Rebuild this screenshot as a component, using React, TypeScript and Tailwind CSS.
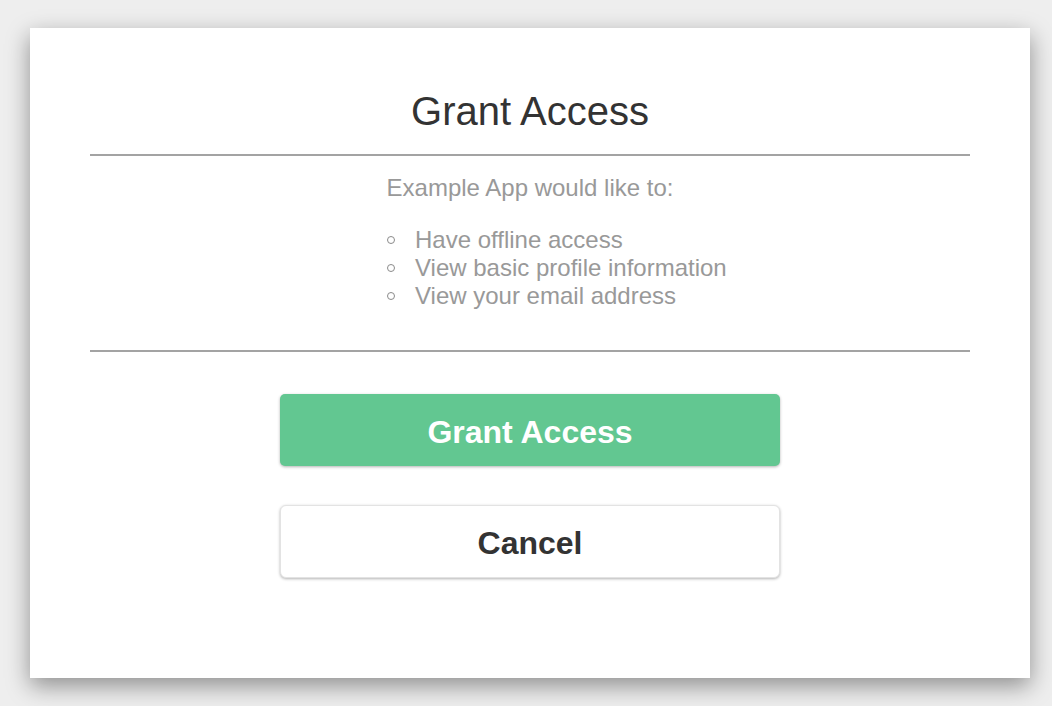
const scopes = ['Have offline access', 'View basic profile information', 'View your email address'];

export default function App() {
  return (
    <div className="min-h-[706px] bg-[#eeeeee] pt-[28px] pl-[30px] font-['Liberation_Sans',Arial,sans-serif]">
      <div className="flex h-[650px] w-[1000px] flex-col bg-white px-[60px] pt-[58px] shadow-[0_8px_22px_rgba(0,0,0,0.4)]">
        <h1 className="text-center text-[40px] leading-[50px] text-[#333333]">Grant Access</h1>
        <div className="mt-[18px] h-[2px] bg-[#a3a3a3]" />
        <p className="mt-[18px] text-center text-[24px] leading-[28px] text-[#999999]">Example App would like to:</p>
        <ul className="mt-[24px] flex flex-col pl-[297px]">
          {scopes.map((s) => (
            <li key={s} className="flex items-center text-[24px] leading-[28px] text-[#999999]">
              <span className="h-[8px] w-[8px] rounded-full border-[1.5px] border-[#8a8a8a]" />
              <span className="ml-[20px]">{s}</span>
            </li>
          ))}
        </ul>
        <div className="mt-[40px] h-[2px] bg-[#a3a3a3]" />
        <button className="mx-auto mt-[42px] h-[72px] w-[500px] rounded-[5px] bg-[#62c791] pt-[3px] text-[32px] font-bold text-white shadow-[0_1px_3px_rgba(0,0,0,0.3)]">
          Grant Access
        </button>
        <button className="mx-auto mt-[39px] h-[73px] w-[500px] rounded-[6px] border border-[#e3e3e3] bg-white pt-[3px] text-[32px] font-bold text-[#333333] shadow-[0_1px_3px_rgba(0,0,0,0.3)]">
          Cancel
        </button>
      </div>
    </div>
  );
}
